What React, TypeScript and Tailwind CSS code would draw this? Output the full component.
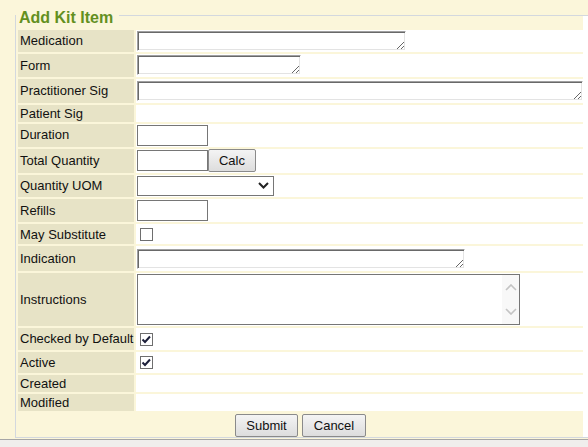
import type { ReactNode } from "react";

const Row = ({ label, h, children }: { label: string; h: string; children?: ReactNode }) => (
  <div className={`flex gap-[2px] ${h}`}>
    <div className="w-[116px] shrink-0 bg-[#e7e3c6] pl-[2px] flex items-center">{label}</div>
    <div className="flex-1 bg-white pl-[1px] flex items-center">{children}</div>
  </div>
);

const SigBox = ({ w }: { w: string }) => (
  <textarea
    rows={1}
    className={`${w} h-[20px] bg-white border border-t-[#a0a0a0] border-l-[#a0a0a0] border-r-white border-b-white shadow-[inset_1px_1px_0_#696969,inset_-1px_-1px_0_#e3e3e3] outline-none resize`}
  />
);

const TextBox = () => (
  <input type="text" className="w-[71px] h-[21px] bg-white border border-[#767676] outline-none" />
);

const Btn = ({ children, w }: { children: ReactNode; w: string }) => (
  <button
    type="button"
    className={`${w} h-[23px] border border-[#8a8a8a] rounded-[2px] bg-linear-to-b from-[#f4f4f4] to-[#dddddd] text-[13px] text-[#111] flex items-center justify-center`}
  >
    {children}
  </button>
);

const Check = ({ checked }: { checked?: boolean }) => (
  <div className="ml-[3px] w-[13px] h-[13px] border border-[#6e6e6e] bg-white">
    {checked && (
      <svg width="11" height="11" viewBox="0 0 11 11">
        <polyline points="1.5,5.5 4,8 9,2.5" fill="none" stroke="#1c1f3a" strokeWidth="2" />
      </svg>
    )}
  </div>
);

export default function App() {
  return (
    <div className="w-[588px] h-[447px] overflow-hidden bg-[#fbf6da] flex flex-col font-['Liberation_Sans',Arial,sans-serif] text-[13px] text-[#111]">
      <div className="pt-[15px] pl-[15px] h-[439px] shrink-0">
        <div className="relative w-[600px] h-[423px] bg-white border-l border-t border-b border-[#d3d8de]">
          <div className="absolute left-0 top-[-6px] bg-[#fbf6da] pl-[3px] pr-[6px] text-[16px] leading-[16px] font-bold text-[#63901f]">
            Add Kit Item
          </div>
          <div className="w-[567px] h-full bg-[#fbf6da] pt-[14px] pl-[2px] flex flex-col gap-[2px]">
            <Row label="Medication" h="h-[22px]">
              <SigBox w="w-[269px]" />
            </Row>
            <Row label="Form" h="h-[23px]">
              <SigBox w="w-[164px]" />
            </Row>
            <Row label="Practitioner Sig" h="h-[24px]">
              <SigBox w="w-[446px]" />
            </Row>
            <Row label="Patient Sig" h="h-[17px]" />
            <Row label="Duration" h="h-[23px]">
              <TextBox />
            </Row>
            <Row label="Total Quantity" h="h-[24px]">
              <TextBox />
              <Btn w="w-[48px]">Calc</Btn>
            </Row>
            <Row label="Quantity UOM" h="h-[22px]">
              <div className="w-[137px] h-[20px] border border-[#767676] bg-white flex items-center justify-end pr-[4px]">
                <svg width="11" height="7" viewBox="0 0 11 7">
                  <polyline points="1,1 5.5,5.5 10,1" fill="none" stroke="#222" strokeWidth="2" />
                </svg>
              </div>
            </Row>
            <Row label="Refills" h="h-[24px]">
              <TextBox />
            </Row>
            <Row label="May Substitute" h="h-[20px]">
              <Check />
            </Row>
            <Row label="Indication" h="h-[25px]">
              <SigBox w="w-[328px]" />
            </Row>
            <Row label="Instructions" h="h-[53px]">
              <div className="w-[383px] h-[51px] border border-[#767676] bg-white flex justify-end">
                <div className="w-[17px] h-full bg-[#f8f8f8] flex flex-col items-center justify-between py-[9px]">
                  <svg width="12" height="7" viewBox="0 0 12 7">
                    <polyline points="1,6 6,1 11,6" fill="none" stroke="#c4c4c4" strokeWidth="1.6" />
                  </svg>
                  <svg width="12" height="7" viewBox="0 0 12 7">
                    <polyline points="1,1 6,6 11,1" fill="none" stroke="#c4c4c4" strokeWidth="1.6" />
                  </svg>
                </div>
              </div>
            </Row>
            <Row label="Checked by Default" h="h-[22px]">
              <Check checked />
            </Row>
            <Row label="Active" h="h-[21px]">
              <Check checked />
            </Row>
            <Row label="Created" h="h-[17px]" />
            <Row label="Modified" h="h-[17px]" />
            <div className="pt-[1px] flex justify-center gap-[4px]">
              <Btn w="w-[63px]">Submit</Btn>
              <Btn w="w-[64px]">Cancel</Btn>
            </div>
          </div>
        </div>
      </div>
      <div className="flex-1 border-t border-[#a6a6a6] bg-[#f0eeec]" />
    </div>
  );
}
